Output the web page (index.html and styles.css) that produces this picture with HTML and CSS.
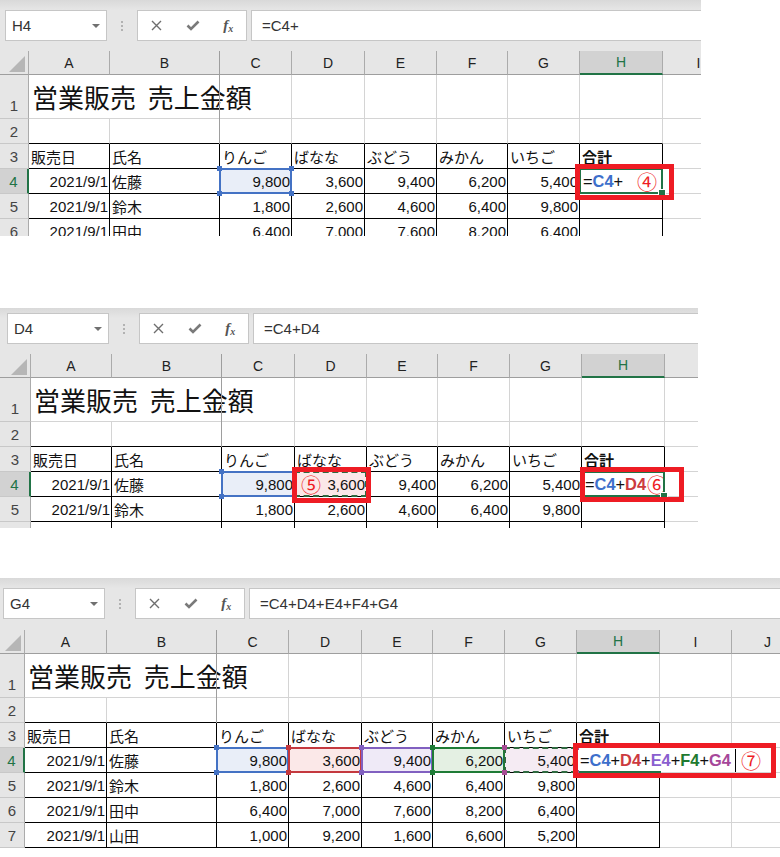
FILE: index.html
```html
<!DOCTYPE html>
<html lang="ja">
<head>
  <meta charset="UTF-8" />
  <meta name="viewport" content="width=device-width, initial-scale=1.0"/>
  <title>営業販売 売上金額 - 数式の入力</title>
  <link rel="stylesheet" href="styles.css">
</head>
<body>

  <!-- step 4: =C4+ -->
  <section class="sheet sheet-1">
    <div class="toolbar">
      <div class="namebox">H4<span class="caret"></span></div>
      <div class="grip"><i></i><i></i><i></i></div>
      <div class="btns">
        <span class="btn"><svg width="11" height="11" viewBox="0 0 11 11"><path d="M1 1L10 10M10 1L1 10" stroke="#6e6e6e" stroke-width="1.4"/></svg></span>
        <span class="btn"><svg width="14" height="11" viewBox="0 0 14 11"><path d="M1.5 5.5L5 9L12.5 1.5" fill="none" stroke="#7a7a7a" stroke-width="2.6"/></svg></span>
        <span class="btn fx"><i>f</i><i class="x">x</i></span>
      </div>
      <div class="formula">=C4+</div>
    </div>
    <div class="grid">
      <div class="pagebreak"></div>
      <div class="row head">
        <div class="corner"></div><div class="ch">A</div><div class="ch">B</div><div class="ch">C</div><div class="ch">D</div><div class="ch">E</div><div class="ch">F</div><div class="ch">G</div><div class="ch sel">H</div><div class="ch">I</div>
      </div>
      <div class="row r1">
        <div class="rh">1</div><div class="c title">営業販売 売上金額</div><div class="c"></div><div class="c"></div><div class="c"></div><div class="c"></div><div class="c"></div><div class="c"></div>
      </div>
      <div class="row">
        <div class="rh">2</div><div class="c tb"></div><div class="c tb"></div><div class="c tb"></div><div class="c tb"></div><div class="c tb"></div><div class="c tb"></div><div class="c tb"></div><div class="c tb"></div><div class="c"></div>
      </div>
      <div class="row">
        <div class="rh">3</div><div class="c t">販売日</div><div class="c t">氏名</div><div class="c t">りんご</div><div class="c t">ばなな</div><div class="c t">ぶどう</div><div class="c t">みかん</div><div class="c t">いちご</div><div class="c t bold">合計</div><div class="c"></div>
      </div>
      <div class="row">
        <div class="rh sel">4</div><div class="c t num">2021/9/1</div><div class="c t">佐藤</div><div class="c t num ref ref-blue">9,800</div><div class="c t num">3,600</div><div class="c t num">9,400</div><div class="c t num">6,200</div><div class="c t num">5,400</div>
        <div class="c t edit active">=<b class="fc-blue">C4</b>+<span class="step s4">④</span><span class="mark mark-1"></span></div><div class="c"></div>
      </div>
      <div class="row">
        <div class="rh">5</div><div class="c t num">2021/9/1</div><div class="c t">鈴木</div><div class="c t num">1,800</div><div class="c t num">2,600</div><div class="c t num">4,600</div><div class="c t num">6,400</div><div class="c t num">9,800</div><div class="c t"></div><div class="c"></div>
      </div>
      <div class="row">
        <div class="rh">6</div><div class="c t num">2021/9/1</div><div class="c t">田中</div><div class="c t num">6,400</div><div class="c t num">7,000</div><div class="c t num">7,600</div><div class="c t num">8,200</div><div class="c t num">6,400</div><div class="c t"></div><div class="c"></div>
      </div>
    </div>
  </section>

  <!-- step 5-6: =C4+D4 -->
  <section class="sheet sheet-2">
    <div class="toolbar">
      <div class="namebox">D4<span class="caret"></span></div>
      <div class="grip"><i></i><i></i><i></i></div>
      <div class="btns">
        <span class="btn"><svg width="11" height="11" viewBox="0 0 11 11"><path d="M1 1L10 10M10 1L1 10" stroke="#6e6e6e" stroke-width="1.4"/></svg></span>
        <span class="btn"><svg width="14" height="11" viewBox="0 0 14 11"><path d="M1.5 5.5L5 9L12.5 1.5" fill="none" stroke="#7a7a7a" stroke-width="2.6"/></svg></span>
        <span class="btn fx"><i>f</i><i class="x">x</i></span>
      </div>
      <div class="formula">=C4+D4</div>
    </div>
    <div class="grid">
      <div class="pagebreak"></div>
      <div class="row head">
        <div class="corner"></div><div class="ch">A</div><div class="ch">B</div><div class="ch">C</div><div class="ch">D</div><div class="ch">E</div><div class="ch">F</div><div class="ch">G</div><div class="ch sel">H</div><div class="ch">I</div>
      </div>
      <div class="row r1">
        <div class="rh">1</div><div class="c title">営業販売 売上金額</div><div class="c"></div><div class="c"></div><div class="c"></div><div class="c"></div><div class="c"></div><div class="c"></div>
      </div>
      <div class="row">
        <div class="rh">2</div><div class="c tb"></div><div class="c tb"></div><div class="c tb"></div><div class="c tb"></div><div class="c tb"></div><div class="c tb"></div><div class="c tb"></div><div class="c tb"></div><div class="c"></div>
      </div>
      <div class="row">
        <div class="rh">3</div><div class="c t">販売日</div><div class="c t">氏名</div><div class="c t">りんご</div><div class="c t">ばなな</div><div class="c t">ぶどう</div><div class="c t">みかん</div><div class="c t">いちご</div><div class="c t bold">合計</div><div class="c"></div>
      </div>
      <div class="row">
        <div class="rh sel">4</div><div class="c t num">2021/9/1</div><div class="c t">佐藤</div><div class="c t num ref ref-blue">9,800</div>
        <div class="c t num ref ref-red dash no-handles"><span class="step s5">⑤</span>3,600<span class="mark mark-2d"></span></div>
        <div class="c t num">9,400</div><div class="c t num">6,200</div><div class="c t num">5,400</div>
        <div class="c t edit active">=<b class="fc-blue">C4</b>+<b class="fc-red">D4</b><span class="step s6">⑥</span><span class="mark mark-2h"></span></div><div class="c"></div>
      </div>
      <div class="row">
        <div class="rh">5</div><div class="c t num">2021/9/1</div><div class="c t">鈴木</div><div class="c t num">1,800</div><div class="c t num">2,600</div><div class="c t num">4,600</div><div class="c t num">6,400</div><div class="c t num">9,800</div><div class="c t"></div><div class="c"></div>
      </div>
      <div class="row">
        <div class="rh">6</div><div class="c t num">2021/9/1</div><div class="c t">田中</div><div class="c t num">6,400</div><div class="c t num">7,000</div><div class="c t num">7,600</div><div class="c t num">8,200</div><div class="c t num">6,400</div><div class="c t"></div><div class="c"></div>
      </div>
    </div>
  </section>

  <!-- step 7: =C4+D4+E4+F4+G4 -->
  <section class="sheet sheet-3">
    <div class="toolbar">
      <div class="namebox">G4<span class="caret"></span></div>
      <div class="grip"><i></i><i></i><i></i></div>
      <div class="btns">
        <span class="btn"><svg width="11" height="11" viewBox="0 0 11 11"><path d="M1 1L10 10M10 1L1 10" stroke="#6e6e6e" stroke-width="1.4"/></svg></span>
        <span class="btn"><svg width="14" height="11" viewBox="0 0 14 11"><path d="M1.5 5.5L5 9L12.5 1.5" fill="none" stroke="#7a7a7a" stroke-width="2.6"/></svg></span>
        <span class="btn fx"><i>f</i><i class="x">x</i></span>
      </div>
      <div class="formula">=C4+D4+E4+F4+G4</div>
    </div>
    <div class="grid">
      <div class="pagebreak"></div>
      <div class="row head">
        <div class="corner"></div><div class="ch">A</div><div class="ch">B</div><div class="ch">C</div><div class="ch">D</div><div class="ch">E</div><div class="ch">F</div><div class="ch">G</div><div class="ch sel">H</div><div class="ch">I</div><div class="ch">J</div>
      </div>
      <div class="row r1">
        <div class="rh">1</div><div class="c title">営業販売 売上金額</div><div class="c"></div><div class="c"></div><div class="c"></div><div class="c"></div><div class="c"></div><div class="c"></div><div class="c"></div>
      </div>
      <div class="row">
        <div class="rh">2</div><div class="c tb"></div><div class="c tb"></div><div class="c tb"></div><div class="c tb"></div><div class="c tb"></div><div class="c tb"></div><div class="c tb"></div><div class="c tb"></div><div class="c"></div><div class="c"></div>
      </div>
      <div class="row">
        <div class="rh">3</div><div class="c t">販売日</div><div class="c t">氏名</div><div class="c t">りんご</div><div class="c t">ばなな</div><div class="c t">ぶどう</div><div class="c t">みかん</div><div class="c t">いちご</div><div class="c t bold">合計</div><div class="c"></div><div class="c"></div>
      </div>
      <div class="row">
        <div class="rh sel">4</div><div class="c t num">2021/9/1</div><div class="c t">佐藤</div>
        <div class="c t num ref ref-blue">9,800</div>
        <div class="c t num ref ref-red">3,600</div>
        <div class="c t num ref ref-purple">9,400</div>
        <div class="c t num ref ref-green">6,200</div>
        <div class="c t num ref ref-pink dash">5,400</div>
        <div class="c edit wide">=<b class="fc-blue">C4</b>+<b class="fc-red">D4</b>+<b class="fc-purple">E4</b>+<b class="fc-green">F4</b>+<b class="fc-pink">G4</b><span class="cursor"></span><span class="step s7">⑦</span><span class="mark mark-3"></span></div>
      </div>
      <div class="row">
        <div class="rh">5</div><div class="c t num">2021/9/1</div><div class="c t">鈴木</div><div class="c t num">1,800</div><div class="c t num">2,600</div><div class="c t num">4,600</div><div class="c t num">6,400</div><div class="c t num">9,800</div><div class="c t"></div><div class="c"></div><div class="c"></div>
      </div>
      <div class="row">
        <div class="rh">6</div><div class="c t num">2021/9/1</div><div class="c t">田中</div><div class="c t num">6,400</div><div class="c t num">7,000</div><div class="c t num">7,600</div><div class="c t num">8,200</div><div class="c t num">6,400</div><div class="c t"></div><div class="c"></div><div class="c"></div>
      </div>
      <div class="row">
        <div class="rh">7</div><div class="c t num">2021/9/1</div><div class="c t">山田</div><div class="c t num">1,000</div><div class="c t num">9,200</div><div class="c t num">1,600</div><div class="c t num">6,600</div><div class="c t num">5,200</div><div class="c t"></div><div class="c"></div><div class="c"></div>
      </div>
    </div>
  </section>

</body>
</html>
```

FILE: styles.css
```css
* {
  box-sizing: border-box;
}

body {
  margin: 0;
  background: #fff;
  color: #111;
  font-family: "Liberation Sans", "Noto Sans CJK JP", sans-serif;
}

/* one screenshot of the sheet */
.sheet {
  overflow: hidden;
  background: #e6e6e6;
}

.sheet-1 {
  width: 701px;
  height: 236px;
  --cols: 29px 81px 110px 72px 73px 72px 71px 72px 83px 72px;
  --pb: 219px;
}

.sheet-2 {
  width: 698px;
  height: 220px;
  margin-top: 72px;
  --cols: 31px 81px 110px 73px 72px 71px 72px 72px 83px 72px;
  --pb: 221px;
}

.sheet-3 {
  width: 780px;
  height: 270px;
  margin-top: 50px;
  --cols: 25px 82px 110px 72px 73px 71px 72px 72px 83px 72px 72px;
  --pb: 216px;
}

/* formula bar */
.toolbar {
  display: flex;
  background: linear-gradient(#d9d9d9, #e6e6e6 10px);
}

.sheet-1 .toolbar { padding: 10px 0 10px 5px; }
.sheet-2 .toolbar { padding: 5px 0 10px 7px; }
.sheet-3 .toolbar { padding: 10px 0 11px 3px; }

.namebox {
  width: 102px;
  height: 31px;
  display: flex;
  align-items: center;
  padding: 0 6px;
  background: #fff;
  border: 1px solid #c6c6c6;
  font-size: 15px;
  color: #333;
}

.caret {
  margin-left: auto;
  border-left: 4px solid transparent;
  border-right: 4px solid transparent;
  border-top: 4px solid #707070;
}

.grip {
  width: 30px;
  display: flex;
  flex-direction: column;
  align-items: center;
  justify-content: center;
  gap: 2px;
}

.grip i {
  width: 2px;
  height: 2px;
  background: #b2b2b2;
}

.btns {
  width: 110px;
  height: 31px;
  display: flex;
  padding-left: 1px;
  background: #fff;
  border: 1px solid #c6c6c6;
}

.btn {
  width: 36px;
  display: flex;
  align-items: center;
  justify-content: center;
}

.fx {
  font-family: "Liberation Serif", serif;
  font-style: italic;
  font-size: 15px;
  color: #555;
}

.fx i {
  font-weight: bold;
}

.fx .x {
  font-size: 10px;
  margin-top: 5px;
}

.formula {
  flex: 1;
  height: 31px;
  margin: 0 -2px 0 4px;
  display: flex;
  align-items: center;
  padding-left: 10px;
  background: #fff;
  border: 1px solid #c6c6c6;
  font-size: 15px;
  color: #333;
}

/* cell grid */
.grid {
  position: relative;
}

.row {
  display: grid;
  grid-template-columns: var(--cols);
  height: 25px;
}

.row.head { height: 24px; }
.row.r1 { height: 44px; }

.pagebreak {
  position: absolute;
  left: var(--pb);
  top: 0;
  width: 1px;
  height: 93px;
  background: #9e9e9e;
  z-index: 1;
}

.corner {
  position: relative;
  background: #e6e6e6;
  border-right: 1px solid #ababab;
  border-bottom: 1px solid #9e9e9e;
}

.corner::after {
  content: "";
  position: absolute;
  right: 3px;
  bottom: 2px;
  width: 16px;
  height: 16px;
  background: #b6b6b6;
  clip-path: polygon(100% 0, 100% 100%, 0 100%);
}

.ch {
  display: flex;
  align-items: center;
  justify-content: center;
  background: #e6e6e6;
  border-right: 1px solid #ababab;
  border-bottom: 1px solid #9e9e9e;
  font-size: 14px;
  color: #222;
}

.ch.sel {
  background: #d2d2d2;
  color: #217346;
  border-bottom: 2px solid #217346;
}

.rh {
  display: flex;
  align-items: center;
  justify-content: center;
  background: #e6e6e6;
  border-right: 1px solid #ababab;
  border-bottom: 1px solid #c8c8c8;
  font-size: 15px;
  color: #444;
}

.r1 .rh {
  align-items: flex-end;
  padding-bottom: 4px;
}

.rh.sel {
  background: #d2d2d2;
  color: #217346;
  border-right: 2px solid #217346;
}

.c {
  position: relative;
  display: flex;
  align-items: center;
  padding: 0 2px;
  background: #fff;
  border-right: 1px solid #d4d4d4;
  border-bottom: 1px solid #d4d4d4;
  font-size: 15px;
  white-space: nowrap;
}

.num {
  justify-content: flex-end;
  padding-right: 1px;
}

.tb {
  border-bottom-color: #000;
}

.t {
  border-right-color: #000;
  border-bottom-color: #000;
}

.bold {
  font-weight: bold;
}

.title {
  grid-column: span 3;
  align-items: flex-end;
  padding: 0 0 4px 3px;
  font-family: "Noto Sans CJK JP", sans-serif;
  font-size: 26px;
  line-height: 34px;
  word-spacing: 6px;
}

/* referenced cells while typing the formula */
.ref::before,
.ref::after {
  content: "";
  position: absolute;
  pointer-events: none;
}

.ref::before {
  inset: -1px;
  border: 2px solid var(--rc);
  z-index: 2;
}

.ref::after {
  inset: -3px;
  z-index: 3;
  background:
    linear-gradient(var(--rc), var(--rc)) left top / 5px 5px no-repeat,
    linear-gradient(var(--rc), var(--rc)) right top / 5px 5px no-repeat,
    linear-gradient(var(--rc), var(--rc)) left bottom / 5px 5px no-repeat,
    linear-gradient(var(--rc), var(--rc)) right bottom / 5px 5px no-repeat;
}

.ref-blue { --rc: #4472c4; background: #e9eef8; }
.ref-red { --rc: #c4393f; background: #fbe8e8; }
.ref-purple { --rc: #8160c0; background: #efeaf7; }
.ref-green { --rc: #1e7b36; background: #e4f0e3; }
.ref-pink { --rc: #a64d94; background: #f5ebf3; }

.dash::before {
  border: 2px dashed #2f6a40;
}

.no-handles::after {
  display: none;
}

/* the cell being edited */
.active::before {
  content: "";
  position: absolute;
  inset: -1px;
  border: 2px solid #217346;
  z-index: 2;
}

.active::after {
  content: "";
  position: absolute;
  right: -4px;
  bottom: -4px;
  width: 6px;
  height: 6px;
  background: #217346;
  border: 1px solid #fff;
  z-index: 3;
}

.edit {
  padding-left: 3px;
  font-size: 16.4px;
}

.wide {
  grid-column: span 3;
}

.wide::before {
  content: "";
  position: absolute;
  left: -1px;
  bottom: -1px;
  width: 85px;
  height: 2px;
  background: #217346;
  z-index: 2;
}

.fc-blue { color: #3d6fcb; }
.fc-red { color: #cc3a40; }
.fc-purple { color: #8a5fcf; }
.fc-green { color: #1e7a30; }
.fc-pink { color: #a6479a; }

.cursor {
  width: 1px;
  height: 23px;
  margin-left: 4px;
  background: #000;
}

/* step numbers and red call-out boxes */
.step {
  font-family: "Noto Sans CJK JP", sans-serif;
  font-size: 20px;
  line-height: 1;
  margin-top: 2px;
  color: #ee1c24;
}

.s4 { margin-left: 14px; }
.s5 { margin-left: 4px; margin-right: auto; }
.s6 { margin-left: 1px; }
.s7 { margin-left: 5px; }

.mark {
  position: absolute;
  border: 5px solid #ee1c24;
  z-index: 5;
}

.mark-1 { left: -5px; top: -5px; right: -12px; bottom: -7px; }
.mark-2d { left: -3px; top: -5px; right: -5px; bottom: -7px; }
.mark-2h { left: -2px; top: -5px; right: -20px; bottom: -6px; }
.mark-3 { left: -4px; top: -5px; right: 27px; bottom: -6px; }
```
